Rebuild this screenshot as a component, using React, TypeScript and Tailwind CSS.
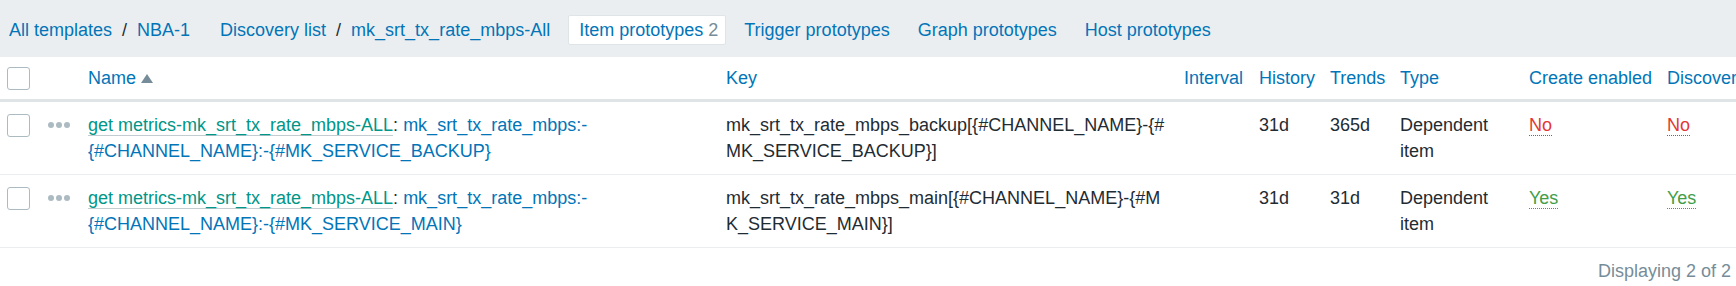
const cols = "grid grid-cols-[41px_40px_638px_458px_75px_71px_70px_129px_138px_200px]";

const rows = [
  {
    master: "get metrics-mk_srt_tx_rate_mbps-ALL",
    name: "mk_srt_tx_rate_mbps:-{#CHANNEL_NAME}:-{#MK_SERVICE_BACKUP}",
    key: "mk_srt_tx_rate_mbps_backup[{#CHANNEL_NAME}-{#MK_SERVICE_BACKUP}]",
    history: "31d",
    trends: "365d",
    enabled: false,
  },
  {
    master: "get metrics-mk_srt_tx_rate_mbps-ALL",
    name: "mk_srt_tx_rate_mbps:-{#CHANNEL_NAME}:-{#MK_SERVICE_MAIN}",
    key: "mk_srt_tx_rate_mbps_main[{#CHANNEL_NAME}-{#MK_SERVICE_MAIN}]",
    history: "31d",
    trends: "31d",
    enabled: true,
  },
];

function Checkbox() {
  return <div className="w-[23px] h-[23px] rounded-[3px] border border-[#acbbc2] bg-white" />;
}

function Toggle({ on }: { on: boolean }) {
  return on ? (
    <span className="text-[#429e47] border-b border-dotted border-[#429e47]">Yes</span>
  ) : (
    <span className="text-[#e33734] border-b border-dotted border-[#e33734]">No</span>
  );
}

export default function App() {
  return (
    <div className="w-full overflow-hidden bg-white text-[18px] text-[#1f2c33] font-['Liberation_Sans',Arial,sans-serif]">
      {/* breadcrumbs + tabs */}
      <div className="h-[57px] bg-[#ebeef0] flex items-center pt-[3px] pl-[9px] text-[#0275b8] whitespace-nowrap">
        <span>All templates</span>
        <span className="px-[10px] text-[#1f2c33]">/</span>
        <span>NBA-1</span>
        <span className="ml-[30px]">Discovery list</span>
        <span className="px-[10px] text-[#1f2c33]">/</span>
        <span>mk_srt_tx_rate_mbps-All</span>
        <div className="ml-[18px] flex items-center gap-[8px]">
          <span className="pl-[10px] pr-[7px] h-[30px] flex items-center bg-white border border-[#dfe4e7] rounded-[2px]">
            Item prototypes <span className="ml-[5px] text-[#768d99]">2</span>
          </span>
          <span className="px-[10px]">Trigger prototypes</span>
          <span className="px-[10px]">Graph prototypes</span>
          <span className="px-[10px]">Host prototypes</span>
        </div>
      </div>

      <div className="w-[1860px]">
        {/* header */}
        <div className={`${cols} h-[45px] items-center border-b-[3px] border-[#dfe4e7] text-[#0275b8] whitespace-nowrap`}>
          <div className="px-[7px]">
            <Checkbox />
          </div>
          <div />
          <div className="px-[7px] flex items-center gap-[5px]">
            Name
            <span className="w-0 h-0 border-l-[6px] border-r-[6px] border-b-[9px] border-l-transparent border-r-transparent border-b-[#768d99]" />
          </div>
          <div className="px-[7px]">Key</div>
          <div className="px-[7px]">Interval</div>
          <div className="px-[7px]">History</div>
          <div className="px-[7px]">Trends</div>
          <div className="px-[7px]">Type</div>
          <div className="px-[7px]">Create enabled</div>
          <div className="px-[7px]">Discover</div>
        </div>

        {rows.map((r) => (
          <div key={r.key} className={`${cols} items-start py-[10px] leading-[26px] border-b border-[#ebeef0]`}>
            <div className="px-[7px] pt-[2px]">
              <Checkbox />
            </div>
            <div className="px-[7px] h-[26px] flex items-center gap-[2px]">
              <span className="w-[6px] h-[6px] rounded-full bg-[#acbbc2]" />
              <span className="w-[6px] h-[6px] rounded-full bg-[#acbbc2]" />
              <span className="w-[6px] h-[6px] rounded-full bg-[#acbbc2]" />
            </div>
            <div className="px-[7px]">
              <div className="max-w-[502px] break-all">
                <span className="text-[#009688] border-b border-[#c3ccd1]">{r.master}</span>
                <span>: </span>
                <span className="text-[#0275b8]">{r.name}</span>
              </div>
            </div>
            <div className="px-[7px]">
              <div className="max-w-[442px] break-all">{r.key}</div>
            </div>
            <div className="px-[7px]" />
            <div className="px-[7px]">{r.history}</div>
            <div className="px-[7px]">{r.trends}</div>
            <div className="px-[7px]">Dependent item</div>
            <div className="px-[7px]">
              <Toggle on={r.enabled} />
            </div>
            <div className="px-[7px]">
              <Toggle on={r.enabled} />
            </div>
          </div>
        ))}
      </div>

      <div className="flex justify-end pr-[5px] pt-[10px] leading-[26px] text-[#768d99]">Displaying 2 of 2</div>
    </div>
  );
}
